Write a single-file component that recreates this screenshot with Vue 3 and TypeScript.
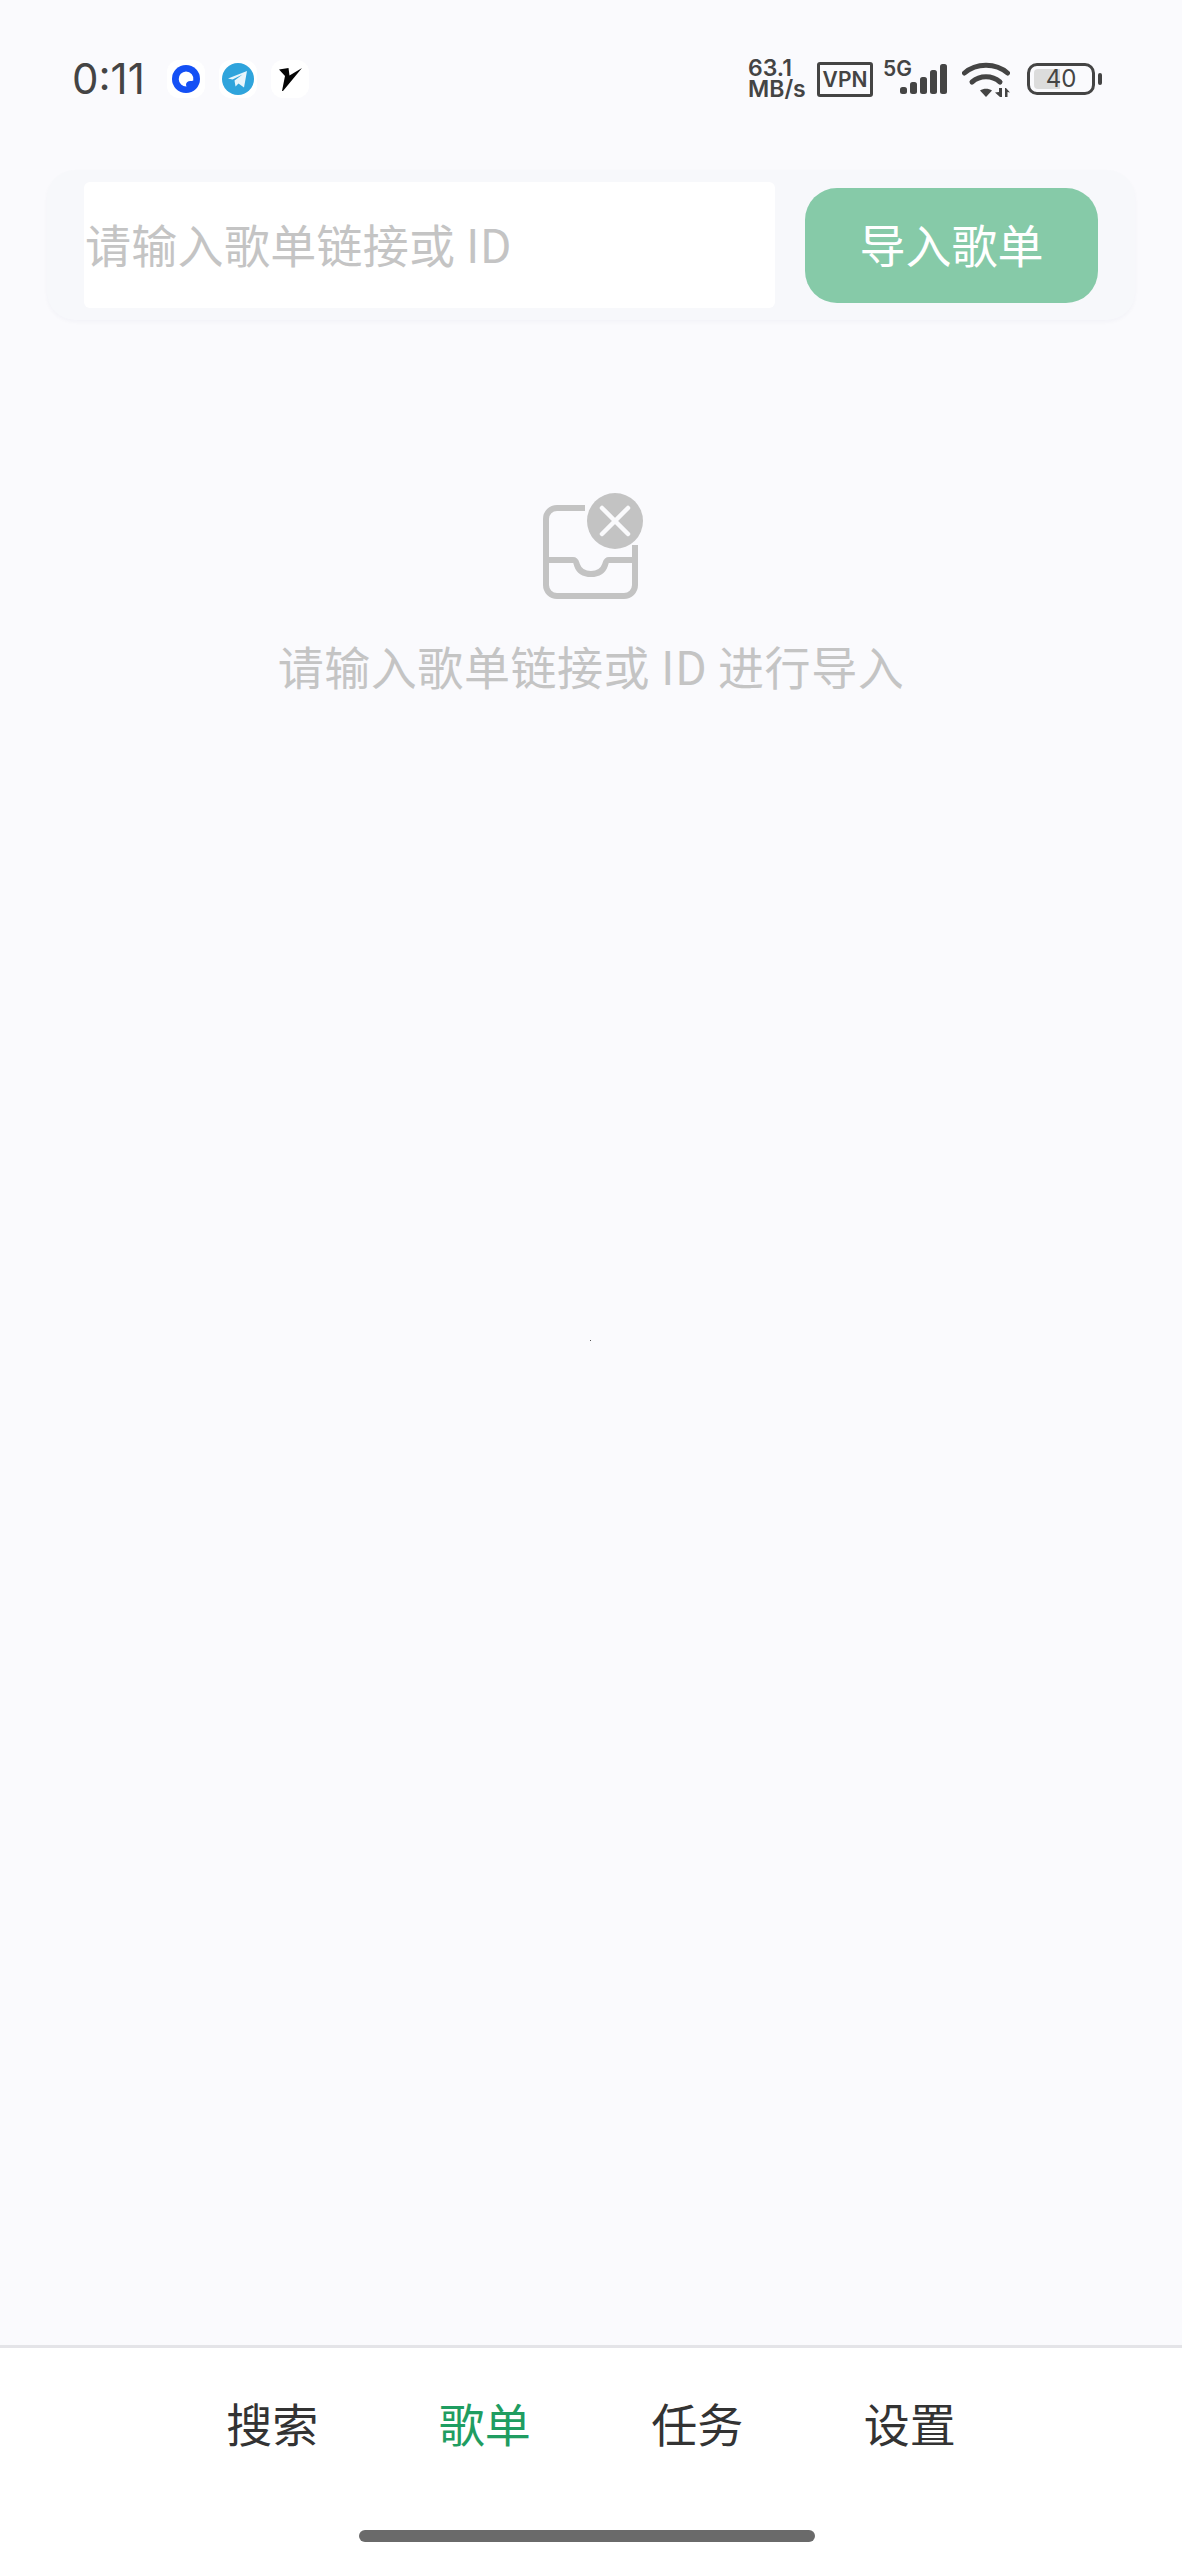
<script setup lang="ts">
import { ref } from 'vue';

const tabs = ['搜索', '歌单', '任务', '设置'];
const activeTab = ref('歌单');
const playlist = ref('');
</script>

<template>
  <div class="page">
    <header class="status-bar">
      <div class="status-left">
        <span class="clock">0:11</span>
        <span class="app-icon">
          <svg width="28" height="28" viewBox="0 0 28 28">
            <circle cx="14" cy="14" r="14" fill="#1450f5" />
            <path d="M14 6.500a7.500 7.500 0 1 0 .5 15c-.8-1.600-.6-3.600.8-4.600 1.500-1.100 4.200-.6 6-1.400A7.500 7.500 0 0 0 14 6.500z" fill="#fff" />
          </svg>
        </span>
        <span class="app-icon">
          <svg width="32" height="32" viewBox="0 0 32 32">
            <circle cx="16" cy="16" r="16" fill="#2fa4dc" />
            <path d="M6 15.500 25 8l-3 16.500-5.500-4-3 3-1-6 8-6-10 5z" fill="#e8f5fb" />
          </svg>
        </span>
        <span class="app-icon">
          <svg width="23" height="23" viewBox="0 0 23 23">
            <path d="M0 1.500 9.500 0l1 7.500L23 0 4 23H3l3-15z" fill="#050505" />
          </svg>
        </span>
      </div>
      <div class="status-right">
        <span class="speed">63.1<br />MB/s</span>
        <span class="vpn">VPN</span>
        <span class="signal">
          <span class="five-g">5G</span>
          <svg width="47" height="30" viewBox="0 0 47 30">
            <rect x="0" y="23" width="7" height="7" rx="2.500" fill="#444" />
            <rect x="10" y="18" width="7" height="12" rx="2.500" fill="#444" />
            <rect x="20" y="13" width="7" height="17" rx="2.500" fill="#444" />
            <rect x="30" y="6" width="7" height="24" rx="2.500" fill="#444" />
            <rect x="40" y="0" width="7" height="30" rx="2.500" fill="#444" />
          </svg>
        </span>
        <svg class="wifi" width="48" height="35" viewBox="0 0 48 35">
          <g fill="none" stroke="#444" stroke-width="5" stroke-linecap="round">
            <path d="M2.500 11C14 .5 34 .5 45.500 11" />
            <path d="M10 20c8-7 20-7 28 0" />
          </g>
          <path d="M18 28.500c3.500-2.500 8.500-2.500 12 0L24 35z" fill="#444" />
          <path d="M37 26h3v9h-2l-5-4.500 4-.5zM43 35h2.500v-5l2.500.5L44 26h-1z" fill="#444" />
        </svg>
        <span class="battery">
          <span class="battery-body">
            <span class="battery-fill"></span>
            <span class="battery-label">40</span>
          </span>
          <span class="battery-cap"></span>
        </span>
      </div>
    </header>

    <section class="import-card">
      <input v-model="playlist" class="link-input" type="text" placeholder="请输入歌单链接或 ID" />
      <button class="import-btn" type="button" disabled>导入歌单</button>
    </section>

    <main class="content">
      <div class="empty">
        <svg class="empty-icon" width="100" height="109" viewBox="0 0 100 109">
          <path d="M42 15H14A11 11 0 0 0 3 26v66a11 11 0 0 0 11 11h67a11 11 0 0 0 11-11V52" fill="none" stroke="#c3c3c3" stroke-width="6" />
          <path d="M3 67h27c3 0 3 2 4 5 2 6 7 9 14 9s12-3 14-9c1-3 1-5 4-5h26" fill="none" stroke="#c3c3c3" stroke-width="6" />
          <circle cx="72" cy="28" r="28" fill="#c3c3c3" />
          <path d="M59 15l26 26M85 15 59 41" stroke="#fafafc" stroke-width="4.500" stroke-linecap="round" />
        </svg>
        <p class="empty-text">请输入歌单链接或 ID 进行导入</p>
      </div>
      <span class="loader-dot"></span>
    </main>

    <nav class="tab-bar">
      <div class="tabs">
        <span v-for="tab in tabs" :key="tab" class="tab" :class="{ active: tab === activeTab }" @click="activeTab = tab">{{ tab }}</span>
      </div>
      <div class="home-indicator"></div>
    </nav>
  </div>
</template>

<style scoped>
.page {
  position: relative;
  display: flex;
  flex-direction: column;
  width: 1182px;
  height: 2560px;
  overflow: hidden;
  background: #fafafd;
  font-family: "Noto Sans CJK SC", "Noto Sans", sans-serif;
}

.status-bar {
  display: flex;
  justify-content: space-between;
  align-items: center;
  height: 158px;
  padding: 0 80px 0 72px;
  box-sizing: border-box;
  color: #444;
}

.status-left {
  display: flex;
  align-items: center;
  gap: 14px;
}

.clock {
  width: 81px;
  font-family: Inter, sans-serif;
  font-size: 42px;
  line-height: 1;
}

.app-icon {
  display: flex;
  align-items: center;
  justify-content: center;
  width: 38px;
  height: 38px;
  border-radius: 12px;
  background: #fff;
}

.status-right {
  display: flex;
  align-items: center;
}

.speed {
  width: 57px;
  margin-right: 12px;
  font-family: Inter, sans-serif;
  font-size: 23px;
  font-weight: 600;
  line-height: 21px;
  white-space: nowrap;
}

.vpn {
  width: 56px;
  height: 35px;
  box-sizing: border-box;
  margin-right: 10px;
  border: 3px solid #444;
  border-radius: 3px;
  font-family: Inter, sans-serif;
  font-size: 21px;
  font-weight: 600;
  line-height: 29px;
  text-align: center;
}

.signal {
  position: relative;
  width: 64px;
  height: 34px;
  margin-right: 15px;
  margin-bottom: 4px;
}

.signal svg {
  position: absolute;
  right: 0;
  bottom: 0;
}

.five-g {
  position: absolute;
  top: -3px;
  left: 0;
  font-family: Inter, sans-serif;
  font-size: 21px;
  font-weight: 600;
  line-height: 24px;
}

.wifi {
  margin-right: 17px;
}

.battery {
  display: flex;
  align-items: center;
}

.battery-body {
  position: relative;
  display: block;
  width: 68px;
  height: 32px;
  box-sizing: border-box;
  border: 3px solid #444;
  border-radius: 10px;
}

.battery-fill {
  position: absolute;
  top: 3px;
  bottom: 3px;
  left: 4px;
  width: 26px;
  border-radius: 4px 0 0 4px;
  background: #dcdcdc;
}

.battery-label {
  position: absolute;
  inset: 0;
  font-family: Inter, sans-serif;
  font-size: 24px;
  line-height: 26px;
  text-align: center;
}

.battery-cap {
  width: 4px;
  height: 12px;
  margin-left: 3px;
  border-radius: 2px;
  background: #444;
}

.import-card {
  display: flex;
  align-items: center;
  height: 150px;
  margin: 12px 47px 0;
  padding: 0 37px;
  box-sizing: border-box;
  border-radius: 28px;
  background: #f7f8fb;
  box-shadow: 0 2px 4px rgba(30, 40, 80, 0.03);
}

.link-input {
  width: 691px;
  height: 126px;
  padding: 0 0 4px 1px;
  box-sizing: border-box;
  border: none;
  border-radius: 6px;
  outline: none;
  background: #fff;
  font-family: inherit;
  font-size: 46px;
  letter-spacing: 0.3px;
}

.link-input::placeholder {
  color: #c4c4c4;
  opacity: 1;
}

.import-btn {
  width: 293px;
  height: 115px;
  margin-left: 30px;
  padding: 0 0 4px;
  border: none;
  border-radius: 32px;
  background: #86caa8;
  color: #fff;
  font-family: inherit;
  font-size: 46px;
}

.content {
  position: relative;
  flex: 1;
}

.empty {
  display: flex;
  flex-direction: column;
  align-items: center;
  padding-top: 173px;
}

.empty-icon {
  margin-left: 4px;
}

.empty-text {
  margin: 31px 0 0;
  color: #c4c4c4;
  font-size: 46px;
  letter-spacing: 0.55px;
  line-height: 64px;
}

.loader-dot {
  position: absolute;
  top: 1020px;
  left: 590px;
  width: 1px;
  height: 1px;
  background: #555;
}

.tab-bar {
  height: 215px;
  box-sizing: border-box;
  border-top: 3px solid #e4e4e8;
  background: #fff;
}

.tabs {
  display: flex;
  justify-content: center;
  padding-top: 41px;
}

.tab {
  width: 212.500px;
  color: #333;
  font-size: 46px;
  line-height: 66px;
  text-align: center;
  cursor: pointer;
}

.tab.active {
  color: #1f9d61;
}

.home-indicator {
  width: 456px;
  height: 12px;
  margin: 75px 0 0 359px;
  border-radius: 6px;
  background: #6a6a6a;
}
</style>
